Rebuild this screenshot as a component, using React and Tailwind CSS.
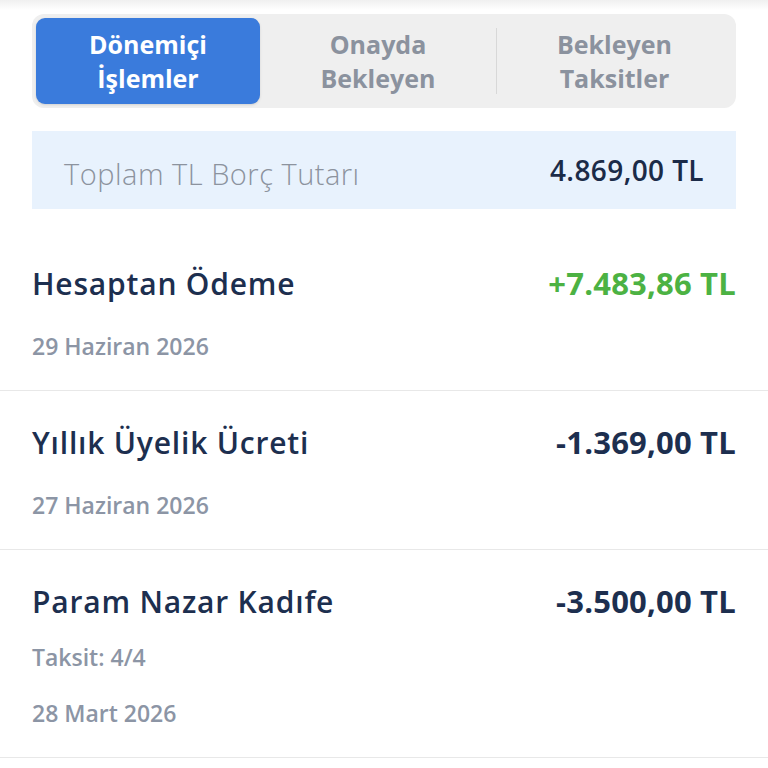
const tabs = [
  { id: 'donem', label: ['Dönemiçi', 'İşlemler'] },
  { id: 'onay', label: ['Onayda', 'Bekleyen'] },
  { id: 'taksit', label: ['Bekleyen', 'Taksitler'] },
];

const transactions = [
  { id: 1, title: 'Hesaptan Ödeme', amount: '+7.483,86 TL', positive: true, details: ['29 Haziran 2026'] },
  { id: 2, title: 'Yıllık Üyelik Ücreti', amount: '-1.369,00 TL', details: ['27 Haziran 2026'] },
  { id: 3, title: 'Param Nazar Kadıfe', amount: '-3.500,00 TL', details: ['Taksit: 4/4', '28 Mart 2026'] },
];

const App = () => {
  const active = 'donem';

  return (
    <div
      className="w-[768px] h-[768px] overflow-hidden bg-white"
      style={{ fontFamily: '"Open Sans", "Noto Sans", sans-serif' }}
    >
      <div className="h-[10px] bg-gradient-to-b from-[#f0f0f0] to-white" />

      <div className="px-8 pt-1">
        {/* Segmented tabs */}
        <div className="flex items-stretch h-[94px] rounded-[12px] bg-[#efefef] p-1">
          {tabs.map((tab, i) => {
            const isActive = tab.id === active;
            return (
              <div key={tab.id} className={`flex items-center ${i === 0 ? 'w-[224px]' : 'flex-1'}`}>
                {i === 2 && <div className="w-px h-[66px] bg-[#d8d8d8]" />}
                <button
                  className={`flex-1 h-full flex flex-col items-center justify-center rounded-[9px] text-[25px] leading-[34px] font-bold ${
                    isActive ? 'bg-[#3a7bdc] text-white shadow-sm' : 'text-[#8b929e]'
                  }`}
                >
                  <span>{tab.label[0]}</span>
                  <span>{tab.label[1]}</span>
                </button>
              </div>
            );
          })}
        </div>

        {/* Summary */}
        <div className="mt-[23px] h-[78px] bg-[#e8f2fd] flex items-center justify-between pl-8 pr-8">
          <span className="text-[29px] font-light text-[#8c939e] tracking-[0.5px] mt-2">Toplam TL Borç Tutarı</span>
          <span className="text-[28px] font-semibold text-[#1b2b48] tracking-[0.4px]">4.869,00 TL</span>
        </div>
      </div>

      {/* Transactions */}
      <div className="mt-[23px]">
        {transactions.map((t) => (
          <div key={t.id} className="border-b border-[#e8e8e8] px-8 pt-[29px] pb-[28px]">
            <div className="flex items-center justify-between h-[44px]">
              <span className="text-[30px] font-semibold text-[#1d2f4f] tracking-[0.8px]">{t.title}</span>
              <span
                className={`text-[31px] font-bold tracking-[0.2px] ${t.positive ? 'text-[#4cb243]' : 'text-[#1d2f4f]'}`}
              >
                {t.amount}
              </span>
            </div>
            {t.details.map((d, j) => (
              <div
                key={d}
                className={`h-[32px] flex items-center text-[23px] font-semibold text-[#8c95a5] ${
                  t.details.length > 1 ? (j === 0 ? 'mt-[18px]' : 'mt-[24px]') : 'mt-[25px]'
                }`}
              >
                {d}
              </div>
            ))}
          </div>
        ))}
      </div>
    </div>
  );
};

export default App;
